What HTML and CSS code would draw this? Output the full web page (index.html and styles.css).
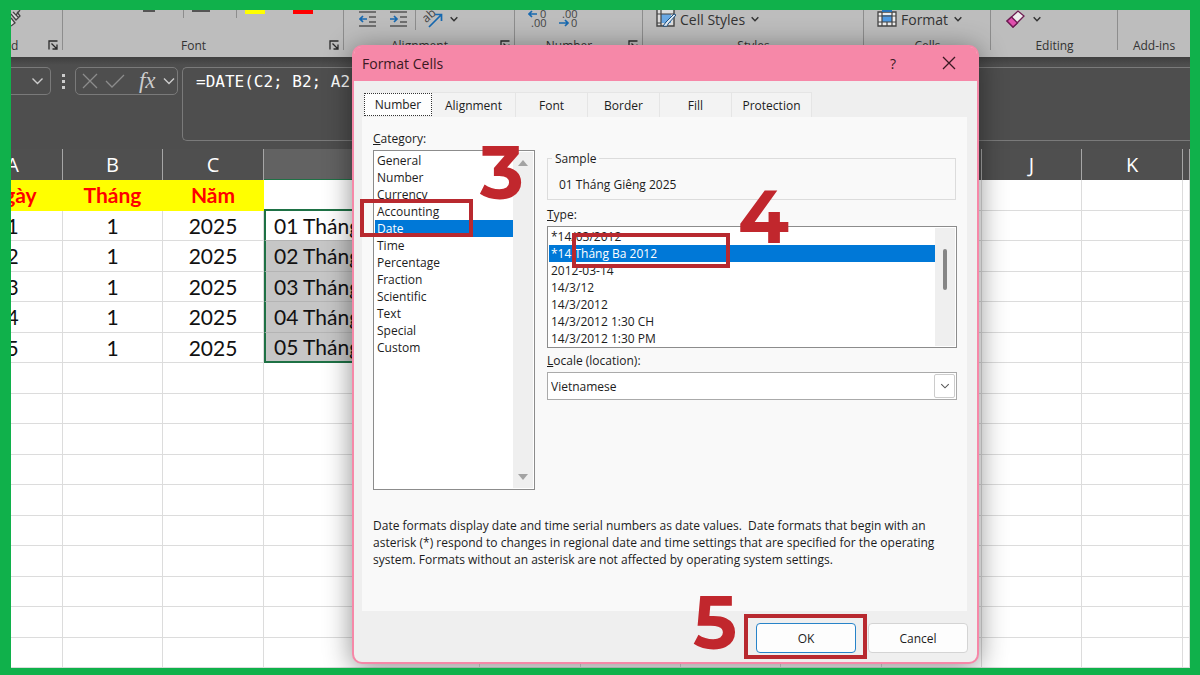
FILE: index.html
```html
<!DOCTYPE html>
<html lang="en">
<head>
<meta charset="utf-8">
<meta name="viewport" content="width=device-width, initial-scale=1">
<title>Format Cells</title>
<link rel="stylesheet" href="styles.css">
</head>
<body>
<svg class="defs" aria-hidden="true">
  <symbol id="launcher" viewBox="0 0 10 10"><path d="M1 9.500V1h8.500M3.500 3.500l5 5M9 4.500V9H4.500" fill="none" stroke="#2b2b2b" stroke-width="1.300"/></symbol>
  <symbol id="chevron" viewBox="0 0 12 8"><path d="M1 1.500l5 5 5-5" fill="none" stroke="currentColor" stroke-width="1.400"/></symbol>
  <symbol id="chevron-bold" viewBox="0 0 12 8"><path d="M1 1.500l5 5 5-5" fill="none" stroke="currentColor" stroke-width="2.200"/></symbol>
</svg>
<main class="screen">
  <section class="ribbon" aria-label="Ribbon">
    <div class="group clipboard">
      <div class="tools">
        <svg width="12" height="18" viewBox="0 0 12 18"><path d="M0 4l5 6 4-4-3-4M9 0L5 5M0 8l4 5-4 3M2 2l6 6" fill="#ddd" stroke="#444" stroke-width="1.300"/></svg>
      </div>
      <div class="label"><span>d</span><svg class="launch" width="10" height="10"><use href="#launcher"/></svg></div>
    </div>
    <div class="group font">
      <div class="tools swatches">
        <i class="underline"></i><i class="rule"></i><i class="border-line"></i><i class="rule"></i><i class="fill-color"></i><i class="font-color"></i>
      </div>
      <div class="label wide-label"><span>Font</span><svg class="launch" width="10" height="10"><use href="#launcher"/></svg></div>
    </div>
    <div class="group align">
      <div class="tools">
        <svg width="18" height="17" viewBox="0 0 18 17"><path d="M0 1h17M10 6h7M10 11h7M0 15h17" stroke="#555" stroke-width="1.300"/><path d="M8 8H1M4 5L1 8l3 3" fill="none" stroke="#1769b0" stroke-width="1.700"/></svg>
        <svg width="18" height="17" viewBox="0 0 18 17"><path d="M0 1h17M10 6h7M10 11h7M0 15h17" stroke="#555" stroke-width="1.300"/><path d="M0 8h7M4 5l3 3-3 3" fill="none" stroke="#1769b0" stroke-width="1.700"/></svg>
        <i class="rule tall"></i>
        <svg width="20" height="18" viewBox="0 0 20 18"><text x="1" y="11" transform="rotate(-42 5 9)" class="ab">ab</text><path d="M6 17L18 5M12 4.500h6.500V11" fill="none" stroke="#1769b0" stroke-width="1.700"/></svg>
        <svg class="chev" width="8" height="6"><use href="#chevron-bold"/></svg>
      </div>
      <div class="label wide-label"><span>Alignment</span><svg class="launch" width="10" height="10"><use href="#launcher"/></svg></div>
    </div>
    <div class="group number">
      <div class="tools">
        <svg width="20" height="18" viewBox="0 0 20 18"><path d="M9 4H1M4 1L1 4l3 3" fill="none" stroke="#1769b0" stroke-width="1.700"/><text x="12" y="8" class="digits">0</text><text x="3" y="17" class="digits">.00</text></svg>
        <svg width="20" height="18" viewBox="0 0 20 18"><text x="3" y="8" class="digits">.00</text><path d="M0 13h9M6 10l3 3-3 3" fill="none" stroke="#1769b0" stroke-width="1.700"/><text x="12" y="17" class="digits">0</text></svg>
      </div>
      <div class="label wide-label"><span>Number</span><svg class="launch" width="10" height="10"><use href="#launcher"/></svg></div>
    </div>
    <div class="group styles">
      <div class="tools">
        <svg width="20" height="18" viewBox="0 0 20 18"><path d="M1 0v16h17V0" fill="#ddd" stroke="#444" stroke-width="1.400"/><path d="M5 4h10v9H5z" fill="#6aa9e4"/><path d="M1 4h17M5 0v16M1 13h4" stroke="#444" stroke-width="1.200"/><path d="M18 4l-8 8-3 4c3 1 5 0 5-2l8-9z" fill="#dfe9f2" stroke="#1b4f80"/></svg>
        <button type="button">Cell Styles</button><svg class="chev" width="8" height="6"><use href="#chevron-bold"/></svg>
      </div>
      <div class="label"><span>Styles</span></div>
    </div>
    <div class="group cells">
      <div class="tools">
        <svg width="20" height="18" viewBox="0 0 20 18"><path d="M1 2h18v14H1z" fill="#eee" stroke="#444" stroke-width="1.300"/><path d="M5 5h10v7H5z" fill="#4f9be3"/><path d="M1 6h18M1 12h18M5 2v14M15 2v14M10 12v4" stroke="#444" stroke-width="1.200"/><path d="M5 1h10" stroke="#2874bb" stroke-width="2"/></svg>
        <button type="button">Format</button><svg class="chev" width="8" height="6"><use href="#chevron-bold"/></svg>
      </div>
      <div class="label"><span>Cells</span></div>
    </div>
    <div class="group editing">
      <div class="tools">
        <svg width="19" height="18" viewBox="0 0 19 18"><path d="M1 11L12 1l6 5L7 17z" fill="#eee" stroke="#6d1b52" stroke-width="1.300"/><path d="M1 11l4.500-4 6 6L7 17z" fill="#e04fae" stroke="#6d1b52" stroke-width="1.300"/></svg>
        <svg class="chev" width="8" height="6"><use href="#chevron-bold"/></svg>
      </div>
      <div class="label"><span>Editing</span></div>
    </div>
    <div class="group addins">
      <div class="tools"></div>
      <div class="label"><span>Add-ins</span></div>
    </div>
  </section>

  <section class="formula-bar" aria-label="Formula bar">
    <div class="name-box"><svg width="13" height="8"><use href="#chevron"/></svg></div>
    <div class="dots"><i></i><i></i><i></i></div>
    <div class="fx-box">
      <svg width="16" height="16" viewBox="0 0 16 16"><path d="M1 1l14 14M15 1L1 15" stroke="#8c8c8c" stroke-width="1.300"/></svg>
      <svg width="20" height="14" viewBox="0 0 20 14"><path d="M1 7l6 6L19 1" fill="none" stroke="#8c8c8c" stroke-width="1.300"/></svg>
      <span class="fx">fx</span>
      <svg width="12" height="8"><use href="#chevron"/></svg>
    </div>
    <input class="formula" type="text" aria-label="Formula" value="=DATE(C2; B2; A2)">
  </section>

  <div class="sheet">
    <table>
      <colgroup><col class="w100"><col class="w100"><col class="w101"><col class="w216"><col class="w101"><col class="w100"><col class="w100"><col class="w101"><col class="w100"><col class="w100"><col class="w101"><col></colgroup>
      <thead><tr><th>A</th><th>B</th><th>C</th><th class="active">D</th><th>E</th><th>F</th><th>G</th><th>H</th><th>I</th><th>J</th><th>K</th><th></th></tr></thead>
      <tbody>
        <tr class="heads"><td>Ngày</td><td>Tháng</td><td>Năm</td><td></td><td></td><td></td><td></td><td></td><td></td><td></td><td></td><td></td></tr>
        <tr><td>1</td><td>1</td><td>2025</td><td class="sel first">01 Tháng Giêng 2025</td><td></td><td></td><td></td><td></td><td></td><td></td><td></td><td></td></tr>
        <tr><td>2</td><td>1</td><td>2025</td><td class="sel">02 Tháng Giêng 2025</td><td></td><td></td><td></td><td></td><td></td><td></td><td></td><td></td></tr>
        <tr><td>3</td><td>1</td><td>2025</td><td class="sel">03 Tháng Giêng 2025</td><td></td><td></td><td></td><td></td><td></td><td></td><td></td><td></td></tr>
        <tr><td>4</td><td>1</td><td>2025</td><td class="sel">04 Tháng Giêng 2025</td><td></td><td></td><td></td><td></td><td></td><td></td><td></td><td></td></tr>
        <tr><td>5</td><td>1</td><td>2025</td><td class="sel last">05 Tháng Giêng 2025</td><td></td><td></td><td></td><td></td><td></td><td></td><td></td><td></td></tr>
        <tr><td></td><td></td><td></td><td></td><td></td><td></td><td></td><td></td><td></td><td></td><td></td><td></td></tr>
        <tr><td></td><td></td><td></td><td></td><td></td><td></td><td></td><td></td><td></td><td></td><td></td><td></td></tr>
        <tr><td></td><td></td><td></td><td></td><td></td><td></td><td></td><td></td><td></td><td></td><td></td><td></td></tr>
        <tr><td></td><td></td><td></td><td></td><td></td><td></td><td></td><td></td><td></td><td></td><td></td><td></td></tr>
        <tr><td></td><td></td><td></td><td></td><td></td><td></td><td></td><td></td><td></td><td></td><td></td><td></td></tr>
        <tr><td></td><td></td><td></td><td></td><td></td><td></td><td></td><td></td><td></td><td></td><td></td><td></td></tr>
        <tr><td></td><td></td><td></td><td></td><td></td><td></td><td></td><td></td><td></td><td></td><td></td><td></td></tr>
        <tr><td></td><td></td><td></td><td></td><td></td><td></td><td></td><td></td><td></td><td></td><td></td><td></td></tr>
        <tr><td></td><td></td><td></td><td></td><td></td><td></td><td></td><td></td><td></td><td></td><td></td><td></td></tr>
        <tr><td></td><td></td><td></td><td></td><td></td><td></td><td></td><td></td><td></td><td></td><td></td><td></td></tr>
      </tbody>
    </table>
  </div>

  <div class="dialog" role="dialog" aria-labelledby="dialog-title">
    <header class="titlebar">
      <h1 id="dialog-title">Format Cells</h1>
      <button type="button" aria-label="Help">?</button>
      <button type="button" aria-label="Close"><svg width="14" height="14" viewBox="0 0 14 14"><path d="M1 1l12 12M13 1L1 13" stroke="#3a1822" stroke-width="1.300"/></svg></button>
    </header>
    <div class="tabs" role="tablist">
      <button type="button" role="tab" class="tab current" aria-selected="true">Number</button>
      <button type="button" role="tab" class="tab wide">Alignment</button>
      <button type="button" role="tab" class="tab">Font</button>
      <button type="button" role="tab" class="tab">Border</button>
      <button type="button" role="tab" class="tab">Fill</button>
      <button type="button" role="tab" class="tab wide">Protection</button>
    </div>
    <div class="panel" role="tabpanel">
      <div class="fields">
        <div class="category">
          <label for="category"><u>C</u>ategory:</label>
          <div class="listbox">
            <select id="category" size="12">
              <option>General</option><option>Number</option><option>Currency</option><option>Accounting</option><option selected>Date</option><option>Time</option><option>Percentage</option><option>Fraction</option><option>Scientific</option><option>Text</option><option>Special</option><option>Custom</option>
            </select>
            <div class="scroll arrows"><i class="up"></i><i class="down"></i></div>
          </div>
        </div>
        <div class="details">
          <fieldset><legend>Sample</legend>01 Tháng Giêng 2025</fieldset>
          <label for="type"><u>T</u>ype:</label>
          <div class="listbox types">
            <select id="type" size="7">
              <option>*14/03/2012</option><option selected>*14 Tháng Ba 2012</option><option>2012-03-14</option><option>14/3/12</option><option>14/3/2012</option><option>14/3/2012 1:30 CH</option><option>14/3/2012 1:30 PM</option>
            </select>
            <div class="scroll"><i class="thumb"></i></div>
          </div>
          <label for="locale"><u>L</u>ocale (location):</label>
          <div class="combo">
            <select id="locale"><option>Vietnamese</option></select>
            <span class="drop"><svg width="10" height="6"><use href="#chevron"/></svg></span>
          </div>
        </div>
      </div>
      <p>Date formats display date and time serial numbers as date values.&nbsp; Date formats that begin with an asterisk (*) respond to changes in regional date and time settings that are specified for the operating system. Formats without an asterisk are not affected by operating system settings.</p>
    </div>
    <footer>
      <button type="button" class="ok">OK</button>
      <button type="button">Cancel</button>
    </footer>
  </div>

  <div class="mark mark-date"></div>
  <div class="mark mark-type"></div>
  <div class="mark mark-ok"></div>
  <span class="step step-3">3</span>
  <span class="step step-4">4</span>
  <span class="step step-5">5</span>
</main>
</body>
</html>
```
FILE: styles.css
```css
* { box-sizing: border-box; }
body { margin: 0; font-family: "Open Sans", "Noto Sans", sans-serif; color: #1c1c1c; }
button, input, select { font: inherit; color: inherit; }
button { background: none; border: 0; padding: 0; }
.defs { position: absolute; width: 0; height: 0; }

.screen {
  position: relative;
  display: flex;
  flex-direction: column;
  height: 100vh;
  border: solid #10b14b;
  border-width: 10px 10px 7px 11px;
  overflow: hidden;
  background: #fff;
}

/* Ribbon */
.ribbon {
  display: grid;
  grid-template-columns: 52px 281px 171px 128px 221px 127px 127px 1fr;
  flex: none;
  height: 47px;
  background: #bdbdbd;
  color: #333;
  font-size: 12px;
}
.group { position: relative; display: flex; flex-direction: column; min-width: 0; }
.group::after { content: ""; position: absolute; right: 0; top: 0; width: 1px; height: 40px; background: #8d8d8d; }
.group:last-child::after { display: none; }
.tools { display: flex; align-items: center; height: 18px; font-size: 14px; }
.label { display: flex; justify-content: center; padding-top: 10px; line-height: 16px; position: relative; }
.launch { position: absolute; right: 5px; top: 12px; }
.clipboard .label { justify-content: flex-start; }
.wide-label { padding-right: 20px; }
.chev { margin-left: 6px; }
.rule { width: 1px; height: 8px; background: #8d8d8d; }
.rule.tall { height: 22px; }
.swatches { align-items: flex-start; padding-left: 80px; }
.swatches i + i { margin-left: 28px; }
.underline, .border-line { width: 12px; height: 2px; background: #555; }
.swatches .rule + i { margin-left: 8px; }
.swatches .border-line + .rule { margin-left: 26px; }
.border-line { width: 18px; }
.fill-color, .font-color { width: 20px; height: 4px; background: #ff0; }
.font-color { background: #f00; }
.align .tools { gap: 7px; padding: 0 0 0 15px; }
.align .tools svg + svg { margin-left: 6px; }
.align .tools .chev { margin-left: 0; }
.number .tools { gap: 11px; padding-left: 13px; }
.styles .tools, .cells .tools { padding-left: 13px; }
.tools button { margin-left: 4px; }
.editing .tools { padding-left: 15px; }
.editing .chev { margin-left: 8px; }
.ab { font-size: 12px; fill: #444; }
.digits { font-size: 11px; fill: #444; }

/* Formula bar */
.formula-bar {
  display: flex;
  align-items: flex-start;
  flex: none;
  height: 92px;
  padding-top: 10px;
  background: linear-gradient(#3f3f3f, #4e4e4e 8px);
  color: #ccc;
}
.name-box, .fx-box { display: flex; align-items: center; height: 28px; border: 1px solid #7a7a7a; border-radius: 5px; }
.name-box { width: 40px; border-left: 0; border-radius: 0 5px 5px 0; justify-content: flex-end; padding-right: 6px; }
.dots { display: flex; flex-direction: column; justify-content: center; gap: 3px; width: 24px; height: 28px; align-items: center; }
.dots i { width: 3px; height: 3px; background: #ccc; }
.fx-box { width: 103px; padding: 0 2px 0 6px; justify-content: space-between; }
.fx { font: italic 23px/22px "Liberation Serif", serif; padding-left: 6px; }
.formula {
  flex: 1;
  min-width: 0;
  height: 74px;
  margin-left: 4px;
  padding: 0 0 46px 13px;
  border: 1px solid #7a7a7a;
  border-right: 0;
  border-radius: 5px 0 0 5px;
  background: none;
  color: #fff;
  font: 16px/26px "DejaVu Sans Mono", monospace;
}

/* Worksheet */
.sheet { flex: 1; overflow: hidden; font-family: Lato, "Noto Sans", sans-serif; font-size: 21px; line-height: 28px; }
.sheet table { width: calc(100% + 48px); margin-left: -48px; table-layout: fixed; border-collapse: separate; border-spacing: 0; }
.w100 { width: 100px; }
.w101 { width: 101px; }
.w216 { width: 216px; }
.sheet th { height: 31px; padding: 1px 0 0; background: #4f4f4f; color: #fff; font: 400 20px/28px "Open Sans", sans-serif; border-right: 1px solid #a6a6a6; }
.sheet th.active { background: #626262; border-bottom: 1px solid #1e7145; }
.sheet td { height: 30px; padding: 0; text-align: center; color: #111; white-space: nowrap; overflow: hidden; border: solid #dcdcdc; border-width: 0 1px 1px 0; }
.sheet tr:nth-child(odd) td { height: 31px; }
.heads td:nth-child(-n+3) { background: #ff0; border-color: #ff0; color: #f00; font-weight: 700; }
.heads td:nth-child(4) { border-bottom: 2px solid #1e7145; }
.sheet td.sel { padding-left: 8px; text-align: left; background: #c6c6c6; border-left: 2px solid #1e7145; border-bottom-color: #b4b4b4; }
.sheet td.first { background: #fff; }
.sheet td.last { border-bottom: 2px solid #1e7145; }

/* Dialog */
.dialog {
  position: absolute;
  left: 341px;
  top: 35px;
  width: 627px;
  display: flex;
  flex-direction: column;
  border: 2px solid #f688a8;
  border-radius: 10px;
  background: #efefef;
  box-shadow: 0 4px 28px rgba(0, 0, 0, .45);
  font-size: 12px;
  line-height: 17px;
}
.titlebar { display: flex; align-items: center; height: 34px; padding: 0 0 2px 8px; background: #f688a8; border-radius: 7px 7px 0 0; color: #3a1822; }
.titlebar h1 { flex: 1; margin: 0; font-size: 14px; font-weight: 400; }
.titlebar button { width: 56px; height: 32px; font-size: 14px; }
.titlebar svg { display: block; margin: auto; }
.tabs { display: flex; padding: 11px 9px 0 10px; }
.tab { width: 72px; height: 25px; background: #f3f3f3; border: solid #e5e5e5; border-width: 1px 1px 0 0; }
.tab.wide { width: 80px; }
.tab.current { width: 68px; height: 23px; margin-top: 1px; background: #fdfdfd; border: 1px dotted #333; }
.tab.current + .tab { width: 84px; }
.panel { margin: 0 10px 0 8px; height: 494px; padding: 13px 10px 0 11px; background: #f9f9f9; }
.fields { display: grid; grid-template-columns: 162px 1fr; gap: 12px; }
.category, .details { display: flex; flex-direction: column; }
.category label { margin-bottom: 3px; }
.listbox { display: flex; height: 340px; border: 1px solid #8c8c8c; background: #fff; padding: 1px; }
.listbox select { flex: 1; min-width: 0; height: 100%; padding: 0; border: 0; outline: 0; background: #fff; overflow: hidden; appearance: none; }
.listbox option { height: 17px; min-height: 17px; padding: 0 2px; line-height: 17px; }
.listbox option:checked { background: #0078d7 linear-gradient(#0078d7, #0078d7); -webkit-text-fill-color: #fff; }
.scroll { display: flex; flex-direction: column; align-items: center; justify-content: space-between; width: 20px; padding: 8px 0; background: #efefef; }
.up, .down { border: 5px solid transparent; }
.up { border-top: 0; border-bottom: 6px solid #a3a3a3; }
.down { border-bottom: 0; border-top: 6px solid #a3a3a3; }
.types { height: 122px; }
.thumb { width: 4px; height: 41px; margin-top: 13px; border-radius: 2px; background: #868686; }
.details { padding-top: 20px; }
.details > label { margin-bottom: 3px; }
fieldset { min-width: 0; height: 50px; margin: 0 1px 6px 0; padding: 9px 11px 0; border: 1px solid #dcdcdc; }
legend { padding: 0 3px; margin-left: -7px; }
.types + label { margin-top: 4px; }
.combo { display: grid; height: 28px; border: 1px solid #aaa; background: #fff; }
.combo select, .drop { grid-area: 1 / 1; }
.combo select { width: 100%; padding: 0 3px; border: 0; background: none; appearance: none; }
.drop { display: flex; align-items: center; justify-content: center; justify-self: end; width: 21px; margin: 1px; border: 1px solid #ccc; border-radius: 2px; color: #555; pointer-events: none; }
.panel p { margin: 27px 0 0; }
footer { display: flex; justify-content: flex-end; gap: 12px; padding: 12px 9px 9px; }
footer button { width: 100px; height: 30px; border: 1px solid #d4d4d4; border-radius: 4px; background: #fdfdfd; }
footer .ok { border-color: #2783c9; }

/* Callouts over the window */
.mark { position: absolute; border: 4px solid #b8292f; pointer-events: none; }
.mark-date { left: 349px; top: 189px; width: 113px; height: 38px; }
.mark-type { left: 561px; top: 223px; width: 158px; height: 35px; }
.mark-ok { left: 733px; top: 604px; width: 123px; height: 45px; }
.step { position: absolute; color: #c1272d; font: 700 74px/72px Montserrat, Inter, sans-serif; }
.step-3 { left: 469px; top: 127px; }
.step-4 { left: 727px; top: 171px; }
.step-5 { left: 682px; top: 577px; }
```
